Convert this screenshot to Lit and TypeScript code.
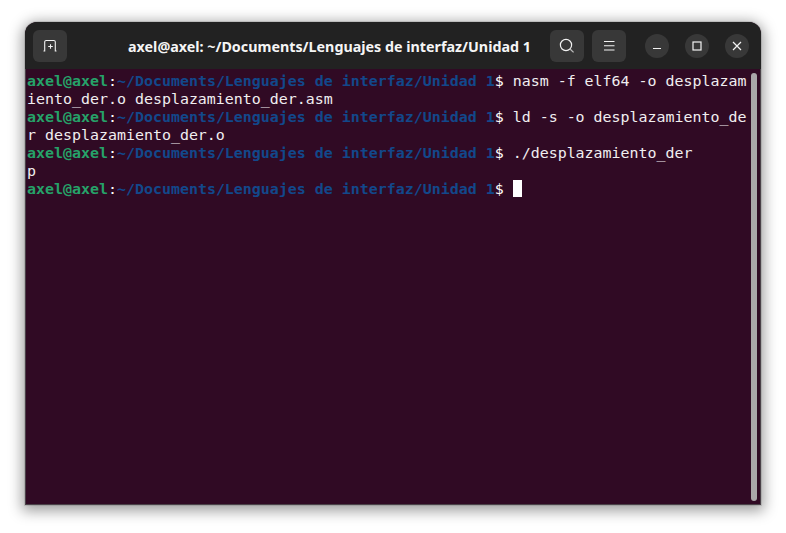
import { LitElement, html, css } from "lit";
import { customElement } from "lit/decorators.js";

const Prompt = () => html`<span class="g">axel@axel</span><span class="w">:</span><span class="b">~/Documents/Lenguajes de interfaz/Unidad 1</span><span class="w">$ </span>`;

@customElement("app-root")
export class AppRoot extends LitElement {
  static styles = css`
    :host { display: block; width: 786px; height: 533px; background: #fff; overflow: hidden; }
    .page { padding: 22px 25px 28px 25px; box-sizing: border-box; height: 533px; display: flex; }
    .win { flex: 1; display: flex; flex-direction: column; border-radius: 12px 12px 0 0; overflow: hidden;
      box-shadow: 0 3px 14px 3px rgba(0,0,0,.38), 0 0 0 1px rgba(0,0,0,.1); background: #300a24; }
    .bar { height: 47px; flex: none; background: #222222; display: flex; align-items: center; padding: 8px 8px 7px; box-sizing: border-box; gap: 8px; }
    .btn { width: 34px; height: 32px; border-radius: 6px; background: #383838; display: flex; align-items: center; justify-content: center; flex: none; }
    .title { flex: 1; text-align: center; color: #f5f5f5; font: 700 14.3px "Noto Sans", "Open Sans", sans-serif; white-space: nowrap; padding-left: 42px; }
    .ctl { display: flex; gap: 16px; margin: 0 4px 0 11px; }
    .round { width: 24px; height: 24px; border-radius: 50%; background: #383838; display: flex; align-items: center; justify-content: center; }
    svg { display: block; fill: none; stroke: #f2f2f2; stroke-width: 1.1; }
    .term { flex: 1; position: relative; padding: 3px 14px 0 2px; color: #e8e6e3; font: 14.95px/18px "DejaVu Sans Mono", monospace; white-space: pre;
      box-shadow: inset 1px 0 #4a4148, inset -1px 0 #4a4148, inset 0 -1px #4a4148; }
    .g { color: #26a269; font-weight: 700; }
    .b { color: #12488b; font-weight: 700; }
    .w { color: #ffffff; }
    .t { color: #f0eef0; }
    .cursor { display: inline-block; width: 9px; height: 17px; background: #fff; vertical-align: -3px; }
    .thumb { position: absolute; right: 4px; top: 4px; bottom: 4px; width: 6px; border-radius: 3px; background: #aaa6a9; }
  `;
  render() {
    return html`<div class="page"><div class="win">
      <div class="bar">
        <div class="btn"><svg width="16" height="16" viewBox="0 0 16 16"><path d="M1.5 13h1.2V4a1.5 1.5 0 0 1 1.5-1.5h7.6A1.5 1.5 0 0 1 13.3 4v9h1.2M8.5 6.2v4.6M6.2 8.5h4.6"/></svg></div>
        <div class="title">axel@axel: ~/Documents/Lenguajes de interfaz/Unidad 1</div>
        <div class="btn"><svg width="16" height="16" viewBox="0 0 16 16"><circle cx="7" cy="7" r="5.6" stroke-width="1.2"/><path d="M11 11l3.6 3.4" stroke-width="1.3" stroke="#bbb"/></svg></div>
        <div class="btn"><svg width="14" height="14" viewBox="0 0 14 14"><path d="M2 2.5h10.5M2 6.8h10.5M2 11h10.5"/></svg></div>
        <div class="ctl">
          <div class="round"><svg width="10" height="10" viewBox="0 0 10 10"><path d="M1 7.5h8" stroke-width="1.2"/></svg></div>
          <div class="round"><svg width="10" height="10" viewBox="0 0 10 10"><rect x="1" y="1" width="8" height="8" stroke-width="1.2"/></svg></div>
          <div class="round"><svg width="10" height="10" viewBox="0 0 10 10"><path d="M1 1l8 8M9 1l-8 8" stroke-width="1.2"/></svg></div>
        </div>
      </div>
      <div class="term">${Prompt()}<span class="t">nasm -f elf64 -o desplazam
iento_der.o desplazamiento_der.asm
</span>${Prompt()}<span class="t">ld -s -o desplazamiento_de
r desplazamiento_der.o
</span>${Prompt()}<span class="t">./desplazamiento_der
p
</span>${Prompt()}<span class="cursor"></span><div class="thumb"></div></div>
    </div></div>`;
  }
}
